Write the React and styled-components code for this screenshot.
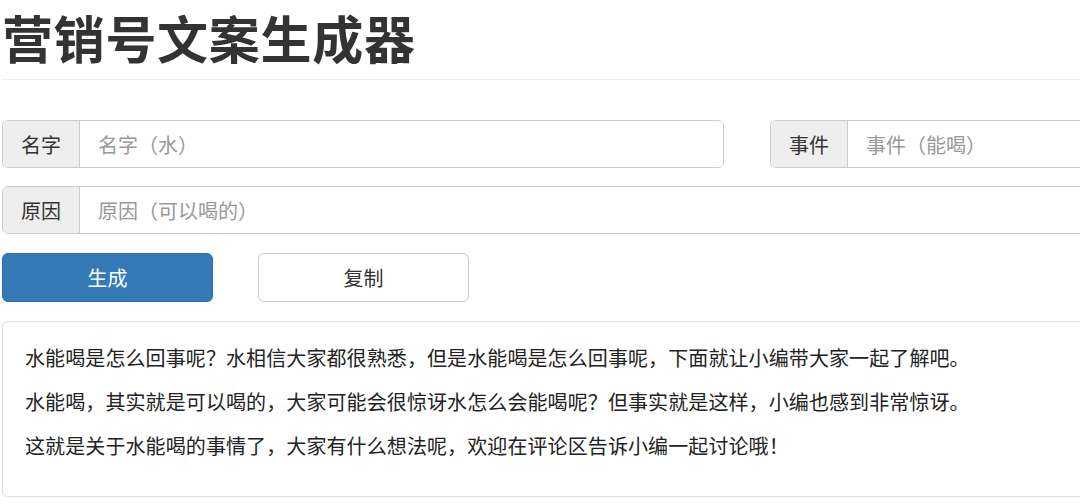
import React, { useState } from "react";
import styled, { createGlobalStyle } from "styled-components";

const GlobalStyle = createGlobalStyle`
  html, body {
    margin: 0;
    padding: 0;
    background: #fff;
    overflow: hidden;
  }
  body {
    font-family: "Noto Sans CJK SC", "Noto Sans", sans-serif;
    color: #333;
  }
`;

const Page = styled.div`
  width: 1490px;
  padding: 0 2px;
`;

const Title = styled.h1`
  margin: 0;
  padding-top: 4px;
  height: 75px;
  font-size: 51px;
  font-weight: 700;
  line-height: 66px;
  letter-spacing: 0.7px;
  color: #333;
  border-bottom: 1px solid #eee;
  margin-bottom: 40px;
`;

const Row = styled.div`
  display: grid;
  grid-template-columns: ${(p) => p.$cols || "1fr"};
  column-gap: 46px;
  margin-bottom: 18px;
`;

const Group = styled.div`
  display: flex;
  height: 48px;
  border: 1px solid #ccc;
  border-radius: 6px;
  overflow: hidden;
  box-sizing: border-box;
`;

const Addon = styled.span`
  display: flex;
  align-items: center;
  justify-content: center;
  width: 76px;
  flex: none;
  background: #eee;
  border-right: 1px solid #ccc;
  font-size: 20px;
  color: #333;
`;

const Input = styled.input`
  flex: 1;
  border: none;
  outline: none;
  padding: 0 18px;
  font-family: inherit;
  font-size: 20px;
  color: #333;
  &::placeholder {
    color: #999;
  }
`;

const Buttons = styled.div`
  display: flex;
  gap: 45px;
  margin-bottom: 19px;
  padding-top: 1px;
`;

const Button = styled.button`
  width: 211px;
  height: 49px;
  border-radius: 6px;
  font-family: inherit;
  font-size: 20px;
  cursor: pointer;
  border: 1px solid ${(p) => (p.$primary ? "#2e6da4" : "#ccc")};
  background: ${(p) => (p.$primary ? "#337ab7" : "#fff")};
  color: ${(p) => (p.$primary ? "#fff" : "#333")};
`;

const Output = styled.div`
  border: 1px solid #ddd;
  border-radius: 6px;
  box-shadow: 0 1px 2px rgba(0, 0, 0, 0.08);
  padding: 14px 22px 28px;
  height: 176px;
  box-sizing: border-box;
`;

const Line = styled.p`
  margin: 0;
  font-size: 20px;
  line-height: 44px;
  letter-spacing: 0.1px;
  color: #222;
`;

export default function App() {
  const [name, setName] = useState("");
  const [thing, setThing] = useState("");
  const [reason, setReason] = useState("");

  const lines = [
    "水能喝是怎么回事呢？水相信大家都很熟悉，但是水能喝是怎么回事呢，下面就让小编带大家一起了解吧。",
    "水能喝，其实就是可以喝的，大家可能会很惊讶水怎么会能喝呢？但事实就是这样，小编也感到非常惊讶。",
    "这就是关于水能喝的事情了，大家有什么想法呢，欢迎在评论区告诉小编一起讨论哦！",
  ];

  return (
    <Page>
      <GlobalStyle />
      <Title>营销号文案生成器</Title>
      <Row $cols="1fr 1fr">
        <Group>
          <Addon>名字</Addon>
          <Input placeholder="名字（水）" value={name} onChange={(e) => setName(e.target.value)} />
        </Group>
        <Group>
          <Addon>事件</Addon>
          <Input placeholder="事件（能喝）" value={thing} onChange={(e) => setThing(e.target.value)} />
        </Group>
      </Row>
      <Row>
        <Group>
          <Addon>原因</Addon>
          <Input placeholder="原因（可以喝的）" value={reason} onChange={(e) => setReason(e.target.value)} />
        </Group>
      </Row>
      <Buttons>
        <Button $primary>生成</Button>
        <Button>复制</Button>
      </Buttons>
      <Output>
        {lines.map((l) => (
          <Line key={l}>{l}</Line>
        ))}
      </Output>
    </Page>
  );
}
